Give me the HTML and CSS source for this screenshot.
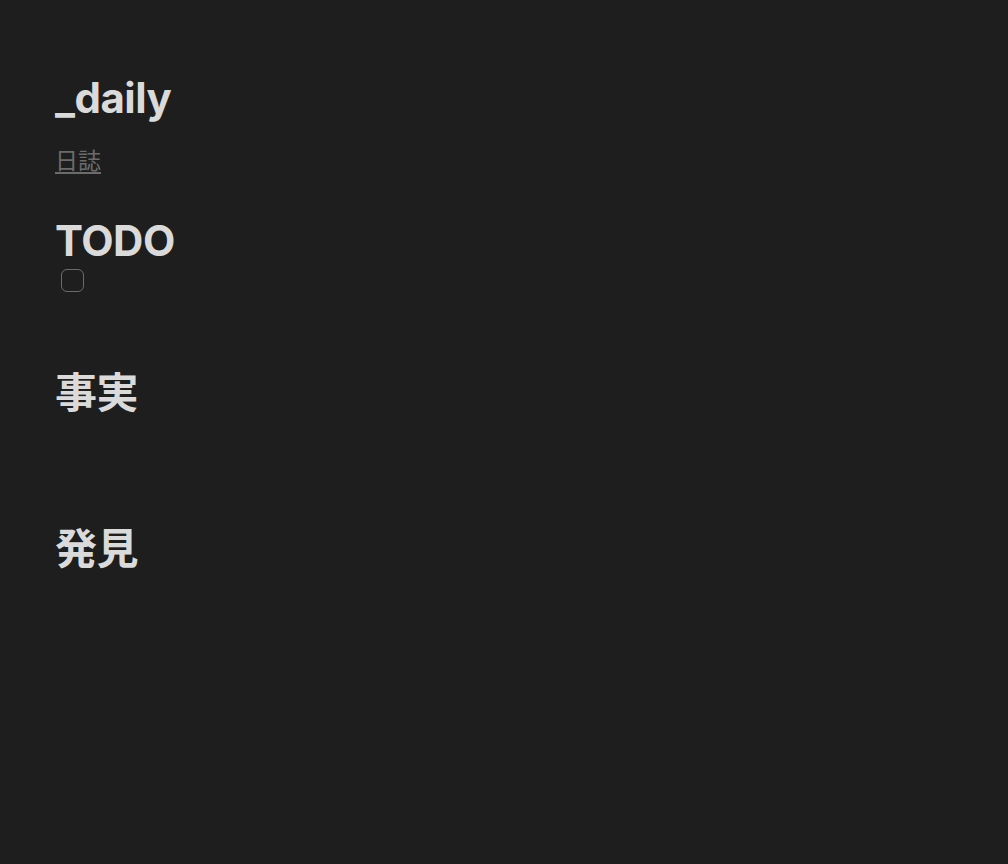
FILE: index.html
```html
<!DOCTYPE html>
<html lang="ja">
<head>
<meta charset="utf-8">
<title>_daily</title>
<link rel="stylesheet" href="styles.css">
</head>
<body>
<main class="note">
  <h1 class="title">_daily</h1>
  <p class="tags"><a class="link" href="#">日誌</a></p>
  <section class="section">
    <h2 class="heading">TODO</h2>
    <div class="task"><span class="checkbox"></span></div>
  </section>
  <section class="section">
    <h2 class="heading">事実</h2>
    <p class="empty"></p>
  </section>
  <section class="section">
    <h2 class="heading">発見</h2>
    <p class="empty"></p>
  </section>
</main>
</body>
</html>
```
FILE: styles.css
```css
html, body {
  margin: 0;
  padding: 0;
  background: #1e1e1e;
}
body {
  font-family: Inter, "Noto Sans CJK JP", sans-serif;
  color: #dadada;
  min-height: 864px;
}
.note {
  padding: 72px 56px 0 55px;
}
.title {
  margin: 0;
  font-size: 42px;
  font-weight: 700;
  line-height: 52px;
  letter-spacing: -0.5px;
}
.tags {
  margin: 22px 0 0;
  font-size: 23px;
  line-height: 30px;
}
.link {
  color: #6b6b6b;
  text-decoration: underline;
  text-decoration-color: #6b6b6b;
  text-underline-offset: 3px;
}
.section {
  margin-top: 37px;
}
.section + .section {
  margin-top: 0;
}
.heading {
  margin: 0;
  font-size: 42px;
  font-weight: 700;
  line-height: 56px;
  letter-spacing: -0.5px;
}
.task {
  height: 96px;
  padding-top: 0;
}
.checkbox {
  display: block;
  box-sizing: border-box;
  margin-left: 6px;
  width: 23px;
  height: 23px;
  border: 1.5px solid #6b6b6b;
  border-radius: 6px;
}
.empty {
  margin: 0;
  height: 100px;
}
```
